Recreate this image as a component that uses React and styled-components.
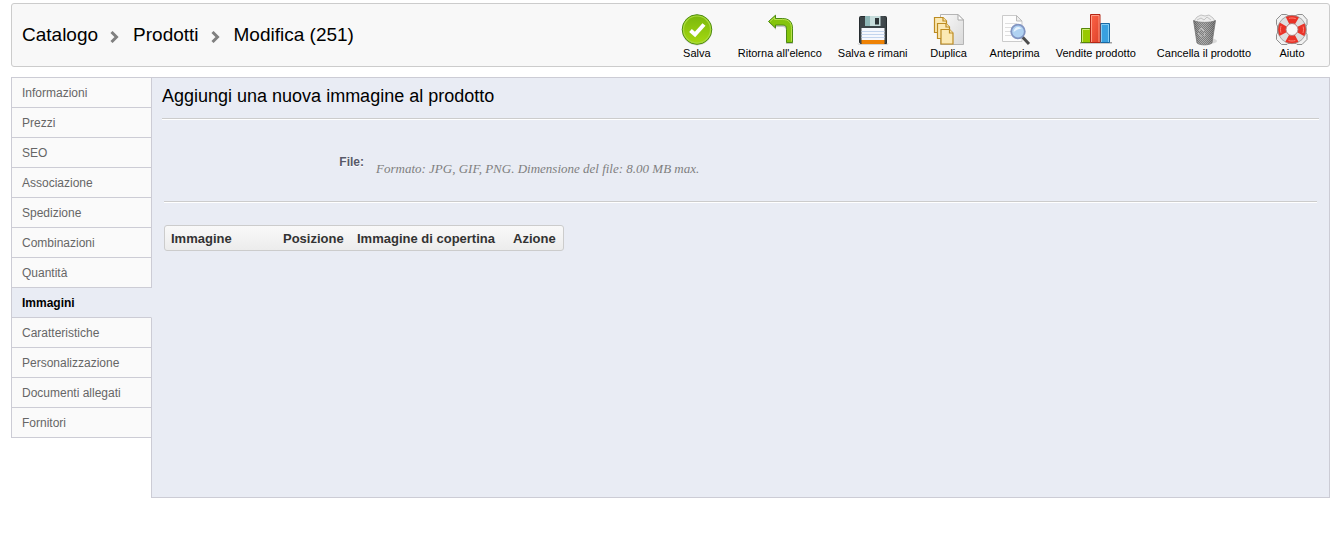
import React from 'react';
import styled, { createGlobalStyle } from 'styled-components';

const GlobalStyle = createGlobalStyle`
  * {
    box-sizing: border-box;
  }
  body {
    margin: 0;
    padding: 3px 10px 0 11px;
    background: #fff;
    color: #000;
    font-family: Arial, "Liberation Sans", sans-serif;
    font-size: 12px;
  }
`;

const Toolbar = styled.header`
  display: flex;
  align-items: center;
  justify-content: space-between;
  min-height: 64px;
  margin-bottom: 10px;
  padding: 0 12px 0 10px;
  background: #f8f8f8;
  border: 1px solid #ccc;
  border-radius: 3px;
`;

const Breadcrumb = styled.h1`
  display: flex;
  align-items: center;
  margin: 0;
  font-size: 19px;
  font-weight: normal;
  line-height: 24px;
  white-space: nowrap;
`;

const Chevron = styled.svg`
  width: 9px;
  height: 12px;
  margin: 4px 14px 0 12px;
`;

const Actions = styled.div`
  display: flex;
  gap: 16px;
  padding-top: 4px;
`;

const Action = styled.button`
  display: flex;
  flex-direction: column;
  align-items: center;
  min-width: 50px;
  margin: 0 0 0 ${p => (p.$spaced ? '5px' : '0')};
  padding: 0;
  border: none;
  background: none;
  color: #000;
  font-family: inherit;
  font-size: 11px;
  line-height: 14px;
  white-space: nowrap;
  cursor: pointer;
  svg {
    display: block;
    width: 32px;
    height: 32px;
  }
`;

const Main = styled.div`
  display: flex;
  align-items: flex-start;
`;

const Tabs = styled.nav`
  position: relative;
  flex: 0 0 141px;
  margin-right: -1px;
  border-top: 1px solid #ccccd5;
`;

const Tab = styled.a`
  display: block;
  height: 30px;
  padding: 1px 0 0 10px;
  border: 1px solid #ccccd5;
  border-top: none;
  border-right-color: ${p => (p.$active ? '#e9ecf4' : '#ccccd5')};
  background: ${p => (p.$active ? '#e9ecf4' : '#fafafa')};
  color: ${p => (p.$active ? '#000' : '#666')};
  font-weight: ${p => (p.$active ? 'bold' : 'normal')};
  line-height: 28px;
  text-decoration: none;
`;

const Panel = styled.main`
  flex: 1;
  min-height: 421px;
  padding: 6px 10px;
  background: #e9ecf4;
  border: 1px solid #ccccd5;
`;

const Title = styled.h2`
  margin: 0 0 10px;
  font-size: 18px;
  font-weight: normal;
  line-height: 24px;
`;

const Separator = styled.hr`
  height: 2px;
  margin: 0 ${p => (p.$inset ? '2px' : '0')};
  border: none;
  border-top: 1px solid #ccc;
  background: #fff;
`;

const FileRow = styled.div`
  display: flex;
  padding: 33px 0 23px;
`;

const FileLabel = styled.h3`
  width: 202px;
  margin: 0 12px 0 0;
  color: #585a69;
  font-size: 12px;
  line-height: 18px;
  text-align: right;
  text-shadow: 0 1px 0 #fff;
`;

const Hint = styled.p`
  margin: 7px 0 0;
  color: #7f7f7f;
  font-family: Georgia, "Liberation Serif", serif;
  font-size: 13px;
  font-style: italic;
  line-height: 18px;
`;

const ImageTable = styled.table`
  margin: 22px 0 0 2px;
  border: 1px solid #ccc;
  border-radius: 3px;
  border-spacing: 0;
  background: linear-gradient(#f9f9f9, #ececec);
`;

const HeadCell = styled.th`
  width: ${p => p.$width};
  height: 24px;
  padding: 0 6px;
  color: #333;
  font-size: 13px;
  text-align: left;
  white-space: nowrap;
`;

const SaveIcon = () => (
  <svg viewBox="0 0 32 32" aria-hidden="true">
    <defs>
      <linearGradient id="save" x1="0" y1="0" x2="0" y2="1">
        <stop offset="0" stopColor="#79b70c" />
        <stop offset="1" stopColor="#a6d90f" />
      </linearGradient>
    </defs>
    <circle cx="16" cy="16.500" r="15" fill="#000" opacity=".15" />
    <circle cx="16" cy="15.500" r="14.800" fill="url(#save)" stroke="#4c8a12" />
    <circle cx="16" cy="15.500" r="13.500" fill="none" stroke="#a9d93e" strokeWidth="1.200" />
    <path d="M9.500 16.500l4.500 4 9-10" fill="none" stroke="#fff" strokeWidth="4" />
  </svg>
);

const BackIcon = () => (
  <svg viewBox="0 0 32 32" aria-hidden="true">
    <path d="M5 8.500L12 2v4h7c6 0 10 3.500 10 9.500V30h-7V17c0-3-1-4-4-4h-6v3z" fill="#000" opacity=".2" />
    <path d="M4.500 7.500L11.500 1.200V4.500H18.500C25 4.500 28.500 8 28.500 14.500V28.500H22.500V15.500C22.500 12 21.500 11 18 11H11.500V14z" fill="#84c40c" stroke="#4c8a12" strokeLinejoin="round" />
    <path d="M6 7.500L10.500 3.500V5.500H18.500C24.500 5.500 27.500 8.500 27.500 14.500V27.500" fill="none" stroke="#b9e04e" />
  </svg>
);

const DiskIcon = () => (
  <svg viewBox="0 0 32 32" aria-hidden="true">
    <path d="M0 29.500h32l-2 1.500H2z" fill="#000" opacity=".15" />
    <path d="M2.500 3.500a1 1 0 011-1h25a1 1 0 011 1V29.500h-26l-1-1z" fill="#3c4447" stroke="#272d30" />
    <path d="M8 2h18v10H8z" fill="#c6dcdb" />
    <path d="M8 2h5v10H8z" fill="#8fb7b7" />
    <path d="M18 4h4v6.500h-4z" fill="#2d3437" />
    <path d="M23.500 2h4v10h-4z" fill="#424b4f" />
    <path d="M4.500 14h23v12h-23z" fill="#f6f8fd" />
    <path d="M4.500 17.500h23M4.500 20.500h23M4.500 23.500h23" stroke="#c3d5ee" />
    <path d="M4.500 26h23v4h-23z" fill="#ee8205" />
  </svg>
);

const DuplicateIcon = () => (
  <svg viewBox="0 0 32 32" aria-hidden="true">
    <defs>
      <linearGradient id="sheet" x1="0" y1="0" x2="1" y2="1">
        <stop offset="0" stopColor="#fafafa" />
        <stop offset="1" stopColor="#d9d9d9" />
      </linearGradient>
    </defs>
    <path d="M7.500.5h17.500l5.500 5.500v24.500h-23z" fill="url(#sheet)" stroke="#b5b5b5" />
    <path d="M25 .500V6h5.500z" fill="#fff" stroke="#a9a9a9" />
    <g fill="#fbe9b4" stroke="#bd8c22" strokeWidth="1.200">
      <path d="M1.500 3.500h8.500l3.500 3.500v11.500h-12z" />
      <path d="M10 3.500V7h3.500" />
      <path d="M4.500 9.500h8.500l3.500 3.500v11.500h-12z" />
      <path d="M13 9.500V13h3.500" />
      <path d="M8 15.500h8.500l3.500 3.500v11H8z" />
      <path d="M16.500 15.500V19H20" />
    </g>
  </svg>
);

const PreviewIcon = () => (
  <svg viewBox="0 0 32 32" aria-hidden="true">
    <path d="M3.500 1.500h14l5.500 5.500v20.500h-19.500z" fill="#fdfdfd" stroke="#cbcbcb" />
    <path d="M17.500 1.500V7H23z" fill="#eee" stroke="#bbb" />
    <path d="M6 9.500h12M6 13.500h8M6 17.500h6M6 21.500h8" stroke="#dedede" />
    <path d="M23.500 23l6.500 7" stroke="#4d4d4d" strokeWidth="3" />
    <circle cx="19" cy="17.500" r="6.800" fill="#b0d2f2" stroke="#8295c2" strokeWidth="1.800" />
    <path d="M14.500 18c1-6 6-6 8.500-3-3-1-5 1-8.500 3z" fill="#e9f4fe" />
  </svg>
);

const ChartIcon = () => (
  <svg viewBox="0 0 32 32" aria-hidden="true">
    <defs>
      <linearGradient id="bar" x1="0" y1="0" x2="1" y2="1">
        <stop offset="0" stopColor="#ff6549" />
        <stop offset="1" stopColor="#dc4028" />
      </linearGradient>
    </defs>
    <path d="M0 28h32v1.500H0z" fill="#000" opacity=".35" />
    <path d="M1.500 14.500h9v14h-9z" fill="#98c900" stroke="#568609" />
    <path d="M2.500 28V15.500h7" fill="none" stroke="#cdea70" />
    <path d="M20.500 9.500h9v19h-9z" fill="#39a0df" stroke="#1768a3" />
    <path d="M21.500 28V10.500h7V28" fill="none" stroke="#84cdf4" />
    <path d="M10.500.5h9.500v28h-9.500z" fill="url(#bar)" stroke="#b42615" />
    <path d="M11.500 28V1.500H19V28" fill="none" stroke="#ff9c86" />
  </svg>
);

const TrashIcon = () => (
  <svg viewBox="0 0 32 32" aria-hidden="true">
    <defs>
      <pattern id="mesh" width="2" height="2" patternUnits="userSpaceOnUse">
        <path d="M0 0h2v2H0z" fill="#6d6d6d" />
        <path d="M0 0h1v1H0zM1 1h1v1H1z" fill="#a6a6a6" />
      </pattern>
      <linearGradient id="shade">
        <stop offset="0" stopColor="#222" stopOpacity=".3" />
        <stop offset=".4" stopColor="#fff" stopOpacity=".12" />
        <stop offset="1" stopColor="#222" stopOpacity=".35" />
      </linearGradient>
    </defs>
    <ellipse cx="21" cy="27" rx="8" ry="3" fill="#000" opacity=".12" />
    <path d="M6 7l3-4 4-2 4 1 4-1 4 3 2 3-2 4H8z" fill="#ededed" stroke="#c2c2c2" />
    <path d="M9 6l4-2 3 2 3-3 4 3" fill="none" stroke="#c2c2c2" />
    <path d="M5.500 6.500c5 2.500 17 2.500 22 0L24 29c-3 2.500-12 2.500-15 0z" fill="url(#mesh)" />
    <path d="M5.500 6.500c5 2.500 17 2.500 22 0L24 29c-3 2.500-12 2.500-15 0z" fill="url(#shade)" stroke="#7a7a7a" strokeWidth=".8" />
    <path d="M11 17l2-3 3 3M10 19l2 3h2M17 19l-1 3" fill="none" stroke="#c4c4c4" />
  </svg>
);

const HelpIcon = () => (
  <svg viewBox="0 0 32 32" aria-hidden="true">
    <path d="M5.500.500h5l1.500 1h8l1.500-1h5l4.500 5v5l-1 1.500v7l1 1.500v5l-5 5h-5l-1-1h-8l-1 1h-5.500l-5-5v-5l1-1.500v-7l-1-1.500v-5z" fill="#f1f1f1" stroke="#8f8f8f" />
    <circle cx="16" cy="15.500" r="10.200" fill="none" stroke="#dedede" strokeWidth="8" />
    <circle cx="16" cy="15.500" r="10.200" fill="none" stroke="#ea3328" strokeWidth="8" strokeDasharray="10 6.022" strokeDashoffset="5" />
    <circle cx="16" cy="15.500" r="11.500" fill="none" stroke="#ff8579" strokeDasharray="7 11.064" strokeDashoffset="3.500" />
    <circle cx="16" cy="15.500" r="14.200" fill="none" stroke="#8e8e8e" strokeWidth=".7" />
    <circle cx="16" cy="15.500" r="6" fill="#f8f8f8" stroke="#a35b58" strokeWidth=".8" />
  </svg>
);

const actions = [
  { label: 'Salva', icon: <SaveIcon /> },
  { label: "Ritorna all'elenco", icon: <BackIcon /> },
  { label: 'Salva e rimani', icon: <DiskIcon /> },
  { label: 'Duplica', icon: <DuplicateIcon /> },
  { label: 'Anteprima', icon: <PreviewIcon /> },
  { label: 'Vendite prodotto', icon: <ChartIcon /> },
  { label: 'Cancella il prodotto', icon: <TrashIcon />, spaced: true },
  { label: 'Aiuto', icon: <HelpIcon /> },
];

const tabs = [
  'Informazioni',
  'Prezzi',
  'SEO',
  'Associazione',
  'Spedizione',
  'Combinazioni',
  'Quantità',
  'Immagini',
  'Caratteristiche',
  'Personalizzazione',
  'Documenti allegati',
  'Fornitori',
];

const Arrow = () => (
  <Chevron viewBox="0 0 9 12" aria-hidden="true">
    <path d="M1.500 1l5 5-5 5" fill="none" stroke="#808080" strokeWidth="3" />
  </Chevron>
);

const App = () => (
  <>
    <GlobalStyle />
    <Toolbar>
      <Breadcrumb>
        Catalogo
        <Arrow />
        Prodotti
        <Arrow />
        Modifica (251)
      </Breadcrumb>
      <Actions>
        {actions.map(({ label, icon, spaced }) => (
          <Action type="button" key={label} $spaced={spaced}>
            {icon}
            {label}
          </Action>
        ))}
      </Actions>
    </Toolbar>
    <Main>
      <Tabs>
        {tabs.map(tab => (
          <Tab href="#" key={tab} $active={tab === 'Immagini'}>{tab}</Tab>
        ))}
      </Tabs>
      <Panel>
        <Title>Aggiungi una nuova immagine al prodotto</Title>
        <Separator />
        <FileRow>
          <FileLabel>File:</FileLabel>
          <Hint>Formato: JPG, GIF, PNG. Dimensione del file: 8.00 MB max.</Hint>
        </FileRow>
        <Separator $inset />
        <ImageTable>
          <thead>
            <tr>
              <HeadCell $width="112px">Immagine</HeadCell>
              <HeadCell $width="74px">Posizione</HeadCell>
              <HeadCell $width="156px">Immagine di copertina</HeadCell>
              <HeadCell $width="56px">Azione</HeadCell>
            </tr>
          </thead>
        </ImageTable>
      </Panel>
    </Main>
  </>
);

export default App;
